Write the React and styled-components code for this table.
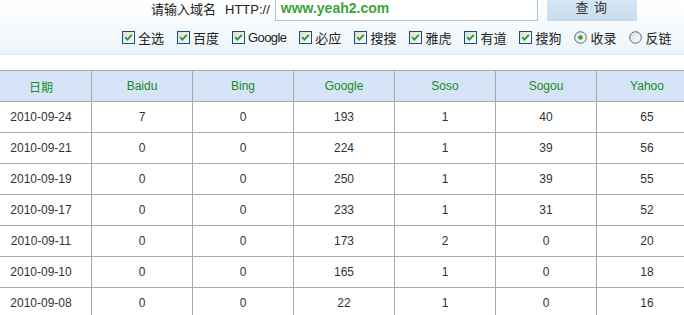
import styled, { createGlobalStyle } from 'styled-components'

const GlobalStyle = createGlobalStyle`
	html, body {
		margin: 0;
		padding: 0;
		background: #fff;
	}
	body {
		font-family: "Liberation Sans", "Noto Sans CJK SC", sans-serif;
		color: #333;
		overflow: hidden;
	}
`

const engines = ['Baidu', 'Bing', 'Google', 'Soso', 'Sogou', 'Yahoo']

const rows = [
	['2010-09-24', 7, 0, 193, 1, 40, 65],
	['2010-09-21', 0, 0, 224, 1, 39, 56],
	['2010-09-19', 0, 0, 250, 1, 39, 55],
	['2010-09-17', 0, 0, 233, 1, 31, 52],
	['2010-09-11', 0, 0, 173, 2, 0, 20],
	['2010-09-10', 0, 0, 165, 1, 0, 18],
	['2010-09-08', 0, 0, 22, 1, 0, 16],
]

const checks = ['全选', '百度', 'Google', '必应', '搜搜', '雅虎', '有道', '搜狗']

const CheckBox = () => (
	<svg width='13' height='13' viewBox='0 0 13 13'>
		<defs>
			<linearGradient id='cb' x1='0' y1='0' x2='1' y2='1'>
				<stop offset='0' stopColor='#dcdcd6' />
				<stop offset='1' stopColor='#ffffff' />
			</linearGradient>
		</defs>
		<rect x='0.5' y='0.5' width='12' height='12' fill='url(#cb)' stroke='#1c4f7a' />
		<path d='M3.2 6.2 L5.4 8.6 L9.8 3.8' fill='none' stroke='#21a121' strokeWidth='1.9' />
	</svg>
)

const Radio = ({ checked }) => (
	<svg width='13' height='13' viewBox='0 0 13 13'>
		<defs>
			<linearGradient id='rb' x1='0' y1='0' x2='1' y2='1'>
				<stop offset='0' stopColor='#dcdcd8' />
				<stop offset='1' stopColor='#ffffff' />
			</linearGradient>
		</defs>
		<circle cx='6.5' cy='6.5' r='5.8' fill='url(#rb)' stroke='#4d6b8a' strokeWidth='1' />
		{checked && <circle cx='6.5' cy='6.5' r='2.3' fill='#2aa52a' />}
	</svg>
)

export default function App() {
	return (
		<Page>
			<GlobalStyle />
			<TopBar>
				<SearchRow>
					<Prompt>请输入域名</Prompt>
					<Scheme>HTTP://</Scheme>
					<DomainInput>www.yeah2.com</DomainInput>
					<QueryButton>查 询</QueryButton>
				</SearchRow>
				<OptionRow>
					{checks.map(c => (
						<Option key={c}>
							<CheckBox />
							<Label tight={c === 'Google'}>{c}</Label>
						</Option>
					))}
					<Option>
						<Radio checked />
						<Label>收录</Label>
					</Option>
					<Option>
						<Radio />
						<Label>反链</Label>
					</Option>
				</OptionRow>
			</TopBar>
			<TableWrap>
				<Table>
					<thead>
						<tr>
							<Th>日期</Th>
							{engines.map(e => (
								<Th key={e}>{e}</Th>
							))}
						</tr>
					</thead>
					<tbody>
						{rows.map(r => (
							<tr key={r[0]}>
								{r.map((v, i) => (
									<Td key={i}>{v}</Td>
								))}
							</tr>
						))}
					</tbody>
				</Table>
			</TableWrap>
		</Page>
	)
}

const Page = styled.div`
	width: 684px;
	height: 315px;
	overflow: hidden;
`

const TopBar = styled.div`
	height: 54px;
	border-bottom: 1px solid #e3e6e8;
	background: linear-gradient(#ffffff, #ecf4f9);
`

const SearchRow = styled.div`
	display: flex;
	align-items: flex-start;
	height: 21px;
	padding-left: 151px;
	font-size: 13px;
`

const Prompt = styled.span`
	line-height: 20px;
	color: #222;
`

const Scheme = styled.span`
	margin-left: 9px;
	line-height: 20px;
	color: #222;
`

const DomainInput = styled.div`
	box-sizing: border-box;
	margin-left: 5px;
	margin-top: -3px;
	width: 263px;
	height: 24px;
	padding: 1px 0 0 5px;
	border: 1px solid #a7c6de;
	border-top: none;
	background: #fff;
	color: #3aa43a;
	font-weight: bold;
	font-size: 14px;
	line-height: 20px;
`

const QueryButton = styled.div`
	margin-left: 9px;
	width: 90px;
	height: 21px;
	background: linear-gradient(#d6e7f4, #c6dced);
	color: #333;
	font-size: 13px;
	text-align: center;
	line-height: 16px;
	letter-spacing: 1px;
`

const OptionRow = styled.div`
	display: flex;
	align-items: center;
	gap: 13px;
	height: 22px;
	margin-top: 5px;
	padding-left: 122px;
	font-size: 13px;
	color: #222;
`

const Option = styled.label`
	display: flex;
	align-items: center;
	gap: 3px;
	svg {
		flex: none;
	}
`

const Label = styled.span`
	letter-spacing: ${props => (props.tight ? '-0.6px' : '0')};
`

const TableWrap = styled.div`
	margin-top: 15px;
	width: 684px;
	overflow: hidden;
`

const Table = styled.table`
	margin-left: -10px;
	width: 708px;
	border-collapse: collapse;
	table-layout: fixed;
	font-size: 12px;
`

const Th = styled.th`
	height: 30px;
	padding: 0;
	border: 1px solid #a9a9a9;
	background: #d5e5f7;
	color: #1c8a22;
	font-weight: normal;
	text-align: center;
`

const Td = styled.td`
	height: 30px;
	padding: 0;
	border: 1px solid #a9a9a9;
	color: #333;
	text-align: center;
`
